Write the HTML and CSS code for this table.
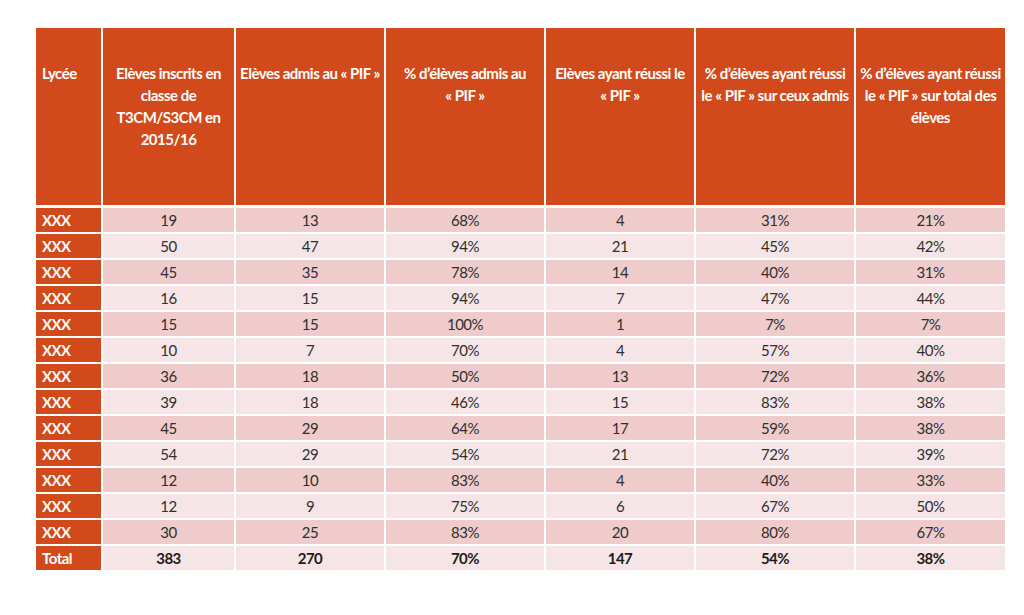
FILE: index.html
```html
<!DOCTYPE html>
<html lang="fr">
<head>
<meta charset="utf-8">
<title>Résultats PIF</title>
<link rel="stylesheet" href="styles.css">
</head>
<body>
<table class="results">
  <colgroup>
    <col class="c1"><col class="c2"><col class="c3"><col class="c4"><col class="c5"><col class="c6"><col class="c7">
  </colgroup>
  <thead>
    <tr>
      <th class="first">Lycée</th>
      <th>Elèves inscrits en<br>classe de<br>T3CM/S3CM en<br>2015/16</th>
      <th>Elèves admis au «&nbsp;PIF&nbsp;»</th>
      <th>% d’élèves admis au<br>«&nbsp;PIF&nbsp;»</th>
      <th>Elèves ayant réussi le<br>«&nbsp;PIF&nbsp;»</th>
      <th>% d’élèves ayant réussi<br>le «&nbsp;PIF&nbsp;» sur ceux admis</th>
      <th>% d’élèves ayant réussi<br>le «&nbsp;PIF&nbsp;» sur total des<br>élèves</th>
    </tr>
  </thead>
  <tbody>
    <tr class="dark"><td class="first">XXX</td><td>19</td><td>13</td><td>68%</td><td>4</td><td>31%</td><td>21%</td></tr>
    <tr class="light"><td class="first">XXX</td><td>50</td><td>47</td><td>94%</td><td>21</td><td>45%</td><td>42%</td></tr>
    <tr class="dark"><td class="first">XXX</td><td>45</td><td>35</td><td>78%</td><td>14</td><td>40%</td><td>31%</td></tr>
    <tr class="light"><td class="first">XXX</td><td>16</td><td>15</td><td>94%</td><td>7</td><td>47%</td><td>44%</td></tr>
    <tr class="dark"><td class="first">XXX</td><td>15</td><td>15</td><td>100%</td><td>1</td><td>7%</td><td>7%</td></tr>
    <tr class="light"><td class="first">XXX</td><td>10</td><td>7</td><td>70%</td><td>4</td><td>57%</td><td>40%</td></tr>
    <tr class="dark"><td class="first">XXX</td><td>36</td><td>18</td><td>50%</td><td>13</td><td>72%</td><td>36%</td></tr>
    <tr class="light"><td class="first">XXX</td><td>39</td><td>18</td><td>46%</td><td>15</td><td>83%</td><td>38%</td></tr>
    <tr class="dark"><td class="first">XXX</td><td>45</td><td>29</td><td>64%</td><td>17</td><td>59%</td><td>38%</td></tr>
    <tr class="light"><td class="first">XXX</td><td>54</td><td>29</td><td>54%</td><td>21</td><td>72%</td><td>39%</td></tr>
    <tr class="dark"><td class="first">XXX</td><td>12</td><td>10</td><td>83%</td><td>4</td><td>40%</td><td>33%</td></tr>
    <tr class="light"><td class="first">XXX</td><td>12</td><td>9</td><td>75%</td><td>6</td><td>67%</td><td>50%</td></tr>
    <tr class="dark"><td class="first">XXX</td><td>30</td><td>25</td><td>83%</td><td>20</td><td>80%</td><td>67%</td></tr>
    <tr class="light total"><td class="first">Total</td><td>383</td><td>270</td><td>70%</td><td>147</td><td>54%</td><td>38%</td></tr>
  </tbody>
</table>
</body>
</html>
```

FILE: styles.css
```css
html, body {
  margin: 0;
  padding: 0;
  background: #ffffff;
}

body {
  font-family: Lato, "Liberation Sans", sans-serif;
}

.results {
  margin: 26px 0 0 34px;
  border-collapse: collapse;
  table-layout: fixed;
  width: 971px;
}

.c1 { width: 67px; }
.c2 { width: 133px; }
.c3 { width: 150px; }
.c4 { width: 160px; }
.c5 { width: 150px; }
.c6 { width: 160px; }
.c7 { width: 151px; }

.results th,
.results td {
  border: 2px solid #ffffff;
  padding: 0;
}

.results th {
  background: #d24a1b;
  color: #ffffff;
  font-weight: 700;
  font-size: 15px;
  line-height: 22px;
  height: 143px;
  padding-top: 34px;
  vertical-align: top;
  text-align: center;
  letter-spacing: -0.5px;
  border-bottom-width: 3px;
}

.results th.first {
  text-align: left;
  padding-left: 6px;
}

.results td {
  height: 24px;
  font-size: 15px;
  line-height: 24px;
  color: #303030;
  text-align: center;
  letter-spacing: -0.5px;
}

.results tr.dark td { background: #efcbcb; }
.results tr.light td { background: #f6e5e6; }

.results tr td.first {
  background: #d24a1b;
  color: #ffffff;
  font-weight: 700;
  text-align: left;
  padding-left: 6px;
}

.results tr.total td {
  font-weight: 700;
  color: #1c1c1c;
}

.results tr.total td.first {
  color: #ffffff;
}
```
